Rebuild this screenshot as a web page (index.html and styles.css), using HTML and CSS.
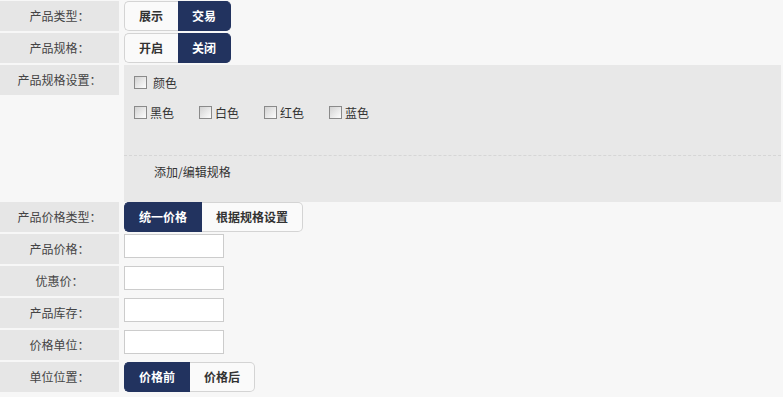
FILE: index.html
```html
<!DOCTYPE html>
<html lang="zh-CN">
<head>
    <meta charset="UTF-8">
    <meta name="viewport" content="width=device-width, initial-scale=1.0">
    <title>产品设置</title>
    <link rel="stylesheet" href="styles.css">
</head>
<body>
    <div class="product-form">
        <div class="row">
            <div class="label">产品类型：</div>
            <div class="field">
                <div class="toggle">
                    <span class="toggle-btn">展示</span>
                    <span class="toggle-btn active">交易</span>
                </div>
            </div>
        </div>
        <div class="row">
            <div class="label">产品规格：</div>
            <div class="field">
                <div class="toggle">
                    <span class="toggle-btn">开启</span>
                    <span class="toggle-btn active">关闭</span>
                </div>
            </div>
        </div>
        <div class="row row-spec">
            <div class="label">产品规格设置：</div>
            <div class="spec-panel">
                <div class="spec-top">
                    <label class="spec-title"><input type="checkbox"><span>颜色</span></label>
                    <div class="spec-options">
                        <label class="spec-option"><input type="checkbox"><span>黑色</span></label>
                        <label class="spec-option"><input type="checkbox"><span>白色</span></label>
                        <label class="spec-option"><input type="checkbox"><span>红色</span></label>
                        <label class="spec-option"><input type="checkbox"><span>蓝色</span></label>
                    </div>
                </div>
                <div class="spec-add">添加/编辑规格</div>
            </div>
        </div>
        <div class="row">
            <div class="label">产品价格类型：</div>
            <div class="field">
                <div class="toggle">
                    <span class="toggle-btn active">统一价格</span>
                    <span class="toggle-btn">根据规格设置</span>
                </div>
            </div>
        </div>
        <div class="row">
            <div class="label">产品价格：</div>
            <div class="field"><input class="text-input" type="text"></div>
        </div>
        <div class="row">
            <div class="label">优惠价：</div>
            <div class="field"><input class="text-input" type="text"></div>
        </div>
        <div class="row">
            <div class="label">产品库存：</div>
            <div class="field"><input class="text-input" type="text"></div>
        </div>
        <div class="row">
            <div class="label">价格单位：</div>
            <div class="field"><input class="text-input" type="text"></div>
        </div>
        <div class="row">
            <div class="label">单位位置：</div>
            <div class="field">
                <div class="toggle">
                    <span class="toggle-btn active">价格前</span>
                    <span class="toggle-btn">价格后</span>
                </div>
            </div>
        </div>
    </div>
</body>
</html>
```

FILE: styles.css
```css
body {
    margin: 0;
    padding-top: 1px;
    background: #f7f7f7;
    font-family: "Noto Sans CJK SC", "Liberation Sans", sans-serif;
    font-size: 12px;
    color: #444;
}
.product-form {
    padding-right: 2px;
}
.row {
    display: flex;
    align-items: flex-start;
    margin-bottom: 2px;
}
.label {
    width: 119px;
    height: 30px;
    line-height: 30px;
    text-align: center;
    background: #e6e6e6;
    flex-shrink: 0;
}
.field {
    margin-left: 5px;
    height: 30px;
    display: flex;
    align-items: flex-start;
}
.toggle {
    display: flex;
    height: 30px;
}
.toggle-btn {
    padding: 0 14px;
    line-height: 28px;
    font-weight: bold;
    color: #333;
    background: #fafafa;
    border: 1px solid #d4d4d4;
}
.toggle-btn:first-child {
    padding-right: 15px;
    border-radius: 5px 0 0 5px;
    border-right: none;
}
.toggle-btn:last-child {
    border-radius: 0 5px 5px 0;
    border-left: none;
}
.toggle-btn.active {
    background: #22335f;
    border-color: #22335f;
    color: #fff;
}
.text-input {
    width: 100px;
    height: 24px;
    margin: 0;
    padding: 0 4px;
    border: 1px solid #ccc;
    background: #fff;
    box-sizing: border-box;
}
.row-spec {
    margin-bottom: 0;
}
.spec-panel {
    flex: 1;
    margin-left: 5px;
    height: 137px;
    background: #e8e8e8;
    color: #333;
}
.spec-top {
    height: 91px;
    box-sizing: border-box;
    padding: 7px 10px 0;
    border-bottom: 1px dashed #d6d6d6;
}
.spec-title,
.spec-option {
    display: inline-flex;
    align-items: center;
    height: 20px;
}
.spec-options {
    display: flex;
    margin-top: 10px;
}
.spec-option {
    width: 65px;
}
input[type="checkbox"] {
    appearance: none;
    width: 13px;
    height: 13px;
    margin: 0 6px 0 0;
    border: 1px solid #8a8a8a;
    background: linear-gradient(135deg, #d2d2d2, #fdfdfd);
    box-sizing: border-box;
}
.spec-option input[type="checkbox"] {
    margin-right: 3px;
}
.spec-add {
    padding: 6px 0 0 30px;
    line-height: 20px;
}
```
